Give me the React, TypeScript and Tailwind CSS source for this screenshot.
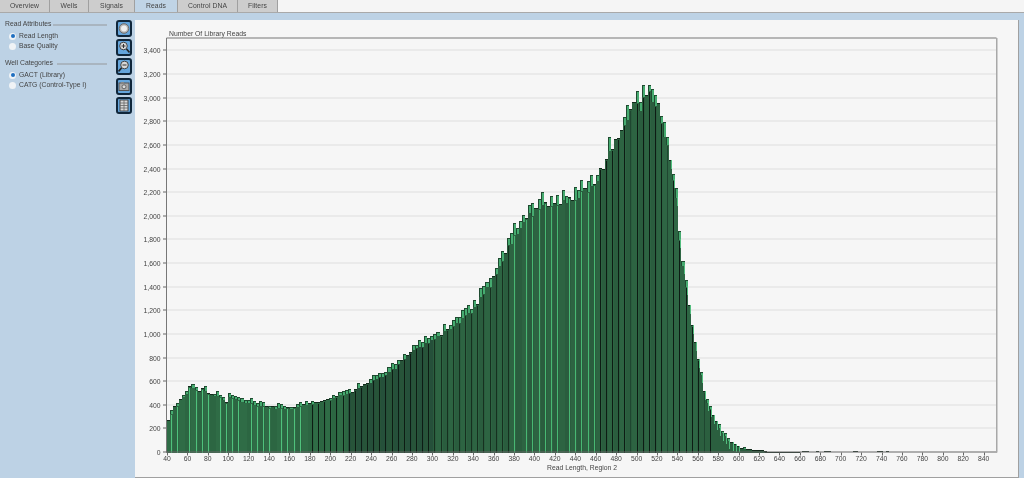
import type React from "react"

// read length -> library reads, traced off the plot
const curve: [number, number][] = [
  [40, 270], [43, 330], [46, 385], [50, 395], [52, 450], [56, 470], [58, 500], [61, 545], [66, 545], [68, 510], [72, 525], [75, 550], [78, 490], [84, 480],
  [90, 480], [94, 440], [98, 420], [100, 470], [106, 450], [112, 425], [121, 410], [130, 390], [141, 380], [150, 370],
  [160, 370], [171, 400], [180, 410], [193, 440], [200, 445], [207, 490], [219, 500], [232, 570], [244, 620],
  [258, 690], [268, 770], [278, 850], [295, 930], [298, 945], [317, 1060], [337, 1190], [356, 1430], [373, 1760], [376, 1780],
  [391, 1980], [404, 2080], [421, 2120], [435, 2150], [452, 2230], [458, 2270], [464, 2380], [474, 2570], [484, 2700],
  [491, 2820], [495, 2930], [503, 2930], [506, 2990], [513, 3040], [516, 2950], [521, 2920], [524, 2750], [526, 2640],
  [530, 2550], [531, 2480], [538, 2190], [540, 1850], [547, 1400], [557, 860], [567, 435], [575, 290], [582, 180], [590, 90], [601, 30],
  [610, 18], [620, 14], [626, 6], [640, 3], [845, 0],
]

function countAt(len: number) {
  for (let i = 1; i < curve.length; i++) {
    const [x1, y1] = curve[i]
    const [x0, y0] = curve[i - 1]
    if (len <= x1) return y0 + ((y1 - y0) * (len - x0)) / (x1 - x0)
  }
  return 0
}

const X = (len: number) => 167 + (len - 40) * 1.0208
const Y = (n: number) => 451.5 - n * 0.1181

const bins = Array.from({ length: 196 }, (_, i) => {
  const len = 40 + i * 3
  const noise = Math.abs((Math.sin(i * 12.9898) * 43758.5453) % 1)
  const wobble = Math.abs((Math.sin(i * 78.233) * 12543.1234) % 1) - 0.5
  const base = Math.min(3070, countAt(len) * (len < 600 ? 1 + wobble * 0.03 : 1))
  const room = Math.max(0, Math.floor(Y(base) - Y(3115)))
  const spike = noise > 0.4 && base > 25 ? Math.min(room, Math.round(Math.min(17, 3 + (base / 3100) * 15) * noise)) : 0
  return { i, len, base, noise, spike }
})

// stray single reads out in the tail
const tail = [662, 664, 666, 676, 684, 686, 688, 712, 714, 736, 738, 744]

const yTicks = Array.from({ length: 18 }, (_, i) => i * 200)
const xTicks = Array.from({ length: 41 }, (_, i) => 40 + i * 20)

function bodyColor(len: number, i: number) {
  if (len < 215) return i % 4 < 2 ? "#2f6c46" : "#2c6642"
  if (len < 300) return i % 4 < 2 ? "#275439" : "#25503a"
  if (len < 525) return i % 4 < 2 ? "#2d6442" : "#2a5d3e"
  if (len < 558) return "#2e6644"
  return "#2b5f3f"
}

function lineColor(len: number, i: number) {
  if (i % 2 !== 1) return null
  if (len < 178) return i % 10 === 5 ? null : "#4fc27c"
  if (len < 300) return "#0d1c14"
  if (len < 378) return "#16301f"
  if (len < 458) return i % 14 === 3 ? null : "#48b873"
  if (len < 572) return i % 12 === 7 ? "#1f4630" : "#0d1c14"
  return null
}

function Chart() {
  return (
    <svg width="883" height="457" viewBox="135 19.5 883 457" className="block" fontFamily="Liberation Sans, Arial, sans-serif">
      <text x="169" y="35.5" fontSize="6.8" fill="#444" className="grayscale">Number Of Library Reads</text>
      {yTicks.map((t) => {
        const y = Math.round(Y(t) - 0.5) + 0.5
        return (
          <g key={t}>
            {t > 0 && <line x1="167" x2="997" y1={y} y2={y} stroke="#dedede" strokeWidth="1" />}
            <line x1="163" x2="167" y1={y} y2={y} stroke="#666" strokeWidth="1" />
            <text x="160.5" y={y + 2.5} fontSize="6.8" fill="#444" textAnchor="end" className="grayscale">{t.toLocaleString("en-US")}</text>
          </g>
        )
      })}
      <g shapeRendering="crispEdges">
        {bins.map((b) => {
          const x = Math.round(X(b.len))
          const w = Math.round(X(b.len + 3)) - x
          const top = Math.round(Y(b.base))
          const line = lineColor(b.len, b.i)
          if (b.base < 2) return null
          return (
            <g key={b.len}>
              {b.spike > 0 && (
                <>
                  <rect x={x} y={top - b.spike} width={w} height={b.spike + 1} fill="#1f4a30" />
                  <rect x={x + 1} y={top - b.spike + 1} width={Math.max(1, w - 1)} height={b.spike + 2} fill="#46ab70" />
                </>
              )}
              <rect x={x} y={top} width={w} height={Math.max(1, 452 - top)} fill={bodyColor(b.len, b.i)} />
              {b.spike === 0 && <rect x={x} y={top - 1} width={w} height={1} fill="#132a1c" />}
              {line && <rect x={x + 1} y={top + 1} width={1} height={Math.max(0, 451 - top)} fill={line} />}
              {b.len >= 530 && b.len < 600 && (
                <rect x={x + w - 1} y={top - 1} width={1} height={Math.min(9, 452 - top)} fill="#52bd7e" />
              )}
            </g>
          )
        })}
        {tail.map((len) => (
          <rect key={len} x={Math.round(X(len))} y={450} width={3} height={1} fill="#1a2f22" />
        ))}
        <rect x={Math.round(X(626))} y={451} width={Math.round(X(660) - X(626))} height={1} fill="#1a2f22" />
      </g>
      <path d="M166.5 452V37.5H996.5" fill="none" stroke="#777" strokeWidth="1" />
      <path d="M166 451.5H997" fill="none" stroke="#666" strokeWidth="1" />
      <path d="M996.75 37.5V452" fill="none" stroke="#a8a8a8" strokeWidth="1.5" />
      {xTicks.map((t) => (
        <g key={t}>
          <line x1={Math.round(X(t)) + 0.5} x2={Math.round(X(t)) + 0.5} y1="452" y2="455" stroke="#666" strokeWidth="1" />
          <text x={X(t)} y="460.5" fontSize="6.8" fill="#444" textAnchor="middle" className="grayscale">{t}</text>
        </g>
      ))}
      <text x="582" y="469" fontSize="6.8" fill="#444" textAnchor="middle" className="grayscale">Read Length, Region 2</text>
    </svg>
  )
}

function Radio({ label, on }: { label: string; on?: boolean }) {
  return (
    <div className="flex h-[10px] items-center gap-[3px] pl-[9px]">
      <span className="flex h-[7px] w-[7px] items-center justify-center rounded-full bg-[#f0f3f6]">
        {on && <span className="h-[4px] w-[4px] rounded-full bg-[#1f6fc0]" />}
      </span>
      <span className="text-[6.8px] leading-none text-[#444] grayscale">{label}</span>
    </div>
  )
}

function Legend({ title, line }: { title: string; line: string }) {
  return (
    <div className="flex h-[9px] items-center justify-between pr-[5px] pl-[5px]">
      <span className="text-[6.8px] leading-none text-[#444] grayscale">{title}</span>
      <span className={`h-[2px] bg-[#a9b5c0] ${line}`} />
    </div>
  )
}

function ToolButton({ mt, children }: { mt: string; children: React.ReactNode }) {
  return (
    <div className={`flex h-[17px] w-[16px] items-center justify-center rounded-[3px] border-2 border-[#10263a] bg-[#64a5dc] ${mt}`}>
      <svg width="12" height="13" viewBox="0 0 12 13" fill="none">{children}</svg>
    </div>
  )
}

export default function App() {
  const tabs = ["Overview", "Wells", "Signals", "Reads", "Control DNA", "Filters"]
  const widths = ["w-[50px]", "w-[39px]", "w-[46px]", "w-[43px]", "w-[60px]", "w-[40px]"]
  return (
    <div className="flex h-[478px] w-[1024px] flex-col overflow-hidden bg-[#f5f5f5] font-['Liberation_Sans',Arial,sans-serif]">
      <div className="flex h-[13px] shrink-0 border-b border-[#a9a9a9] bg-[#f5f5f5]">
        {tabs.map((t, i) => (
          <div
            key={t}
            className={`flex items-center justify-center border-r border-[#a0a0a0] text-[6.8px] leading-none tracking-[0.1px] text-[#444] ${widths[i]} ${t === "Reads" ? "bg-[#c0d4e6]" : "bg-[#cdcdcd]"}`}
          >
            <span className="grayscale">{t}</span>
          </div>
        ))}
      </div>
      <div className="flex min-h-0 flex-1 bg-[#bdd2e5] pt-[7px] pr-[5px]">
        <div className="-mt-[7px] flex w-[135px] shrink-0">
          <div className="flex w-[112px] shrink-0 flex-col pt-[7px]">
            <Legend title="Read Attributes" line="w-[54px]" />
            <div className="mt-[2px] flex flex-col">
              <Radio label="Read Length" on />
              <Radio label="Base Quality" />
            </div>
            <div className="mt-[8px]">
              <Legend title="Well Categories" line="w-[50px]" />
            </div>
            <div className="mt-[2px] flex flex-col">
              <Radio label="GACT (Library)" on />
              <Radio label="CATG (Control-Type I)" />
            </div>
          </div>
          <div className="flex flex-col pt-[7px] pl-[4px]">
            <ToolButton mt="">
              <circle cx="6" cy="6.5" r="4.8" fill="#b5b5b5" stroke="#6a6a6a" />
              <circle cx="6" cy="6.5" r="3" fill="#efefef" />
            </ToolButton>
            <ToolButton mt="mt-[2px]">
              <circle cx="5.5" cy="5" r="3.8" fill="#d8d8d8" stroke="#444" />
              <path d="M3.5 5h4M5.5 3v4" stroke="#333" />
              <path d="M8.5 8l3 3.5" stroke="#222" strokeWidth="1.6" />
            </ToolButton>
            <ToolButton mt="mt-[2px]">
              <circle cx="6.5" cy="5" r="3.8" fill="#d8d8d8" stroke="#444" />
              <path d="M4.5 5h4" stroke="#333" />
              <path d="M3.5 8l-3 3.5" stroke="#222" strokeWidth="1.6" />
            </ToolButton>
            <ToolButton mt="mt-[3px]">
              <rect x="1" y="3" width="10" height="7.5" fill="#a8a8a8" stroke="#555" />
              <rect x="3" y="2" width="3" height="1.5" fill="#888" />
              <circle cx="6" cy="6.8" r="2" fill="#dcdcdc" stroke="#666" />
            </ToolButton>
            <ToolButton mt="mt-[2px]">
              <rect x="2" y="1" width="8" height="11" fill="#d8d8d8" stroke="#444" />
              <path d="M2 4h8M2 6.5h8M2 9h8M6 1v11" stroke="#666" strokeWidth="0.8" />
            </ToolButton>
          </div>
        </div>
        <div className="flex-1 border-r border-b border-[#a0a0a0] bg-[#f6f6f6]">
          <Chart />
        </div>
      </div>
    </div>
  )
}
